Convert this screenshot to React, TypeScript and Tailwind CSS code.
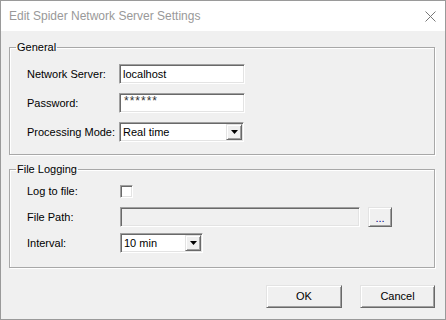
import React from "react";

const sunken =
	"border border-t-[#a0a0a0] border-l-[#a0a0a0] border-b-white border-r-white shadow-[inset_1px_1px_0_#696969,inset_-1px_-1px_0_#e3e3e3]";
const raised =
	"border border-t-[#e3e3e3] border-l-[#e3e3e3] border-b-[#696969] border-r-[#696969] shadow-[inset_1px_1px_0_#ffffff,inset_-1px_-1px_0_#a0a0a0] bg-[#f0f0f0]";
const group =
	"w-[426px] border border-[#a8a8a8] shadow-[inset_1px_1px_0_#fff,1px_1px_0_#fff] pl-[17px]";

const DropArrow = () => (
	<div className={`${raised} w-[16px] h-full flex items-center justify-center`}>
		<svg width="7" height="4" viewBox="0 0 7 4">
			<path d="M0 0h7L3.5 4z" fill="#000" />
		</svg>
	</div>
);

const Select = ({ value, width }: { value: string; width: string }) => (
	<div className={`${sunken} ${width} h-[20px] bg-white flex items-stretch p-[1px]`}>
		<span className="flex-1 pl-[2px] leading-[16px]">{value}</span>
		<DropArrow />
	</div>
);

const Row = ({ label, children }: { label: string; children: React.ReactNode }) => (
	<div className="flex items-center h-[20px]">
		<span className="w-[92px] shrink-0">{label}</span>
		{children}
	</div>
);

const App = () => {
	return (
		<div className="w-[446px] h-[320px] border border-[#9a9a9a] bg-[#f0f0f0] flex flex-col font-['Liberation_Sans',Arial,sans-serif] text-[11px] text-black">
			{/* title bar */}
			<div className="h-[30px] bg-white flex items-center justify-between pl-[8px] pr-[8px] shrink-0">
				<span className="text-[12px] text-[#999999]">Edit Spider Network Server Settings</span>
				<svg width="11" height="11" viewBox="0 0 11 11" className="mr-[1px]">
					<path d="M0.5 0.5l10 10M10.5 0.5l-10 10" stroke="#777" strokeWidth="1" />
				</svg>
			</div>

			{/* body */}
			<div className="flex-1 pl-[8px] pt-[10px]">
				<fieldset className={`${group} pb-[12px]`}>
					<legend className="-ml-[11px] px-[1px] leading-[13px]">General</legend>
					<div className="pt-[10px] flex flex-col gap-[9px]">
						<Row label="Network Server:">
							<div className={`${sunken} w-[126px] h-[20px] bg-white pl-[3px] leading-[18px]`}>localhost</div>
						</Row>
						<Row label="Password:">
							<div className={`${sunken} w-[126px] h-[20px] bg-white pl-[4px] leading-[15px] text-[12px] tracking-[1px] text-[#333]`}>******</div>
						</Row>
						<Row label="Processing Mode:">
							<Select value="Real time" width="w-[125px]" />
						</Row>
					</div>
				</fieldset>

				<fieldset className={`${group} mt-[8px] pb-[14px]`}>
					<legend className="-ml-[11px] px-[1px] leading-[13px]">File Logging</legend>
					<div className="pt-[5px] flex flex-col gap-[6px]">
						<Row label="Log to file:">
							<div className={`${sunken} ml-[1px] w-[13px] h-[13px] bg-white`} />
						</Row>
						<Row label="File Path:">
							<div className={`${sunken} ml-[1px] w-[240px] h-[20px] bg-[#f0f0f0]`} />
							<div className={`${raised} ml-[8px] w-[24px] h-[20px] flex items-end justify-center pb-[4px] text-[#00007f] leading-[8px]`}>...</div>
						</Row>
						<Row label="Interval:">
							<div className="ml-[1px]">
								<Select value="10 min" width="w-[83px]" />
							</div>
						</Row>
					</div>
				</fieldset>

				<div className="mt-[17px] w-[426px] flex justify-end gap-[18px]">
					<button className={`${raised} w-[76px] h-[23px]`}>OK</button>
					<button className={`${raised} w-[75px] h-[23px]`}>Cancel</button>
				</div>
			</div>
		</div>
	);
};

export default App;
